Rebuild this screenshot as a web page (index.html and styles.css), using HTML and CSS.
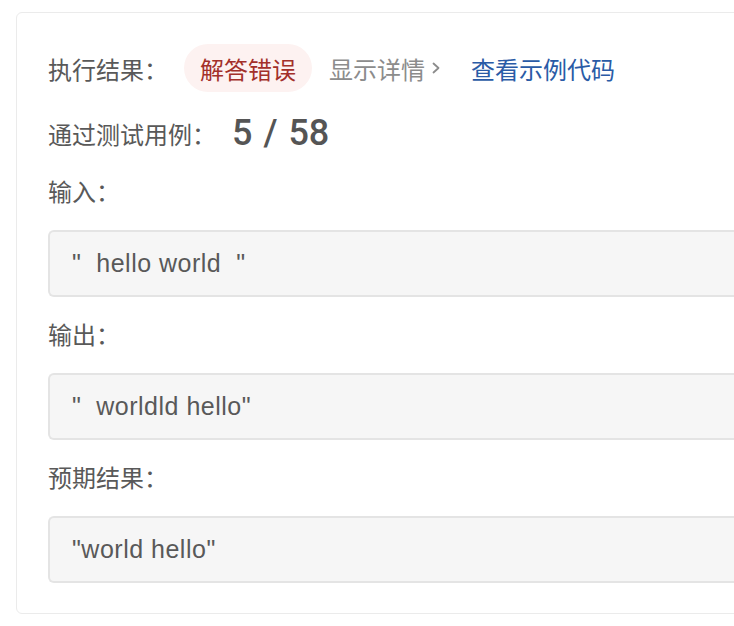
FILE: index.html
```html
<!DOCTYPE html>
<html lang="zh-CN">
<head>
<meta charset="utf-8">
<title>执行结果</title>
<link rel="stylesheet" href="styles.css">
</head>
<body>
<div class="card">
  <div class="row result-row">
    <span class="label">执行结果：</span>
    <span class="pill">解答错误</span>
    <span class="details">显示详情<svg class="chev" width="10" height="14" viewBox="0 0 10 14"><polyline points="2.5,2.5 7.5,7 2.5,11.5" fill="none" stroke="#8c8c8c" stroke-width="1.8" stroke-linecap="round" stroke-linejoin="round"/></svg></span>
    <span class="link">查看示例代码</span>
  </div>
  <div class="row pass-row">
    <span class="label">通过测试用例：</span>
    <span class="count">5 / 58</span>
  </div>
  <div class="section">
    <div class="sec-label">输入：</div>
    <div class="box">"  hello world  "</div>
  </div>
  <div class="section">
    <div class="sec-label">输出：</div>
    <div class="box">"  worldld hello"</div>
  </div>
  <div class="section">
    <div class="sec-label">预期结果：</div>
    <div class="box">"world hello"</div>
  </div>
</div>
</body>
</html>
```
FILE: styles.css
```css
html, body {
  margin: 0;
  padding: 0;
  background: #ffffff;
  overflow: hidden;
}
body {
  font-family: "Liberation Sans", "Noto Sans CJK SC", sans-serif;
  color: #595959;
}
.card {
  margin: 12px 0 0 16px;
  width: 780px;
  border: 1px solid #ebebeb;
  border-radius: 6px;
  padding: 31px 0 30px 31px;
  box-sizing: border-box;
}
.row {
  display: flex;
  align-items: center;
}
.label {
  font-size: 24px;
  color: #595959;
}
.result-row {
  height: 48px;
}
.pill {
  margin-left: 16px;
  height: 48px;
  display: flex;
  align-items: center;
  padding: 0 16px;
  border-radius: 24px;
  background: #fdf2f1;
  color: #a3302a;
  font-size: 24px;
}
.details {
  margin-left: 17px;
  font-size: 24px;
  color: #8c8c8c;
  display: flex;
  align-items: center;
}
.chev {
  margin-left: 6px;
}
.link {
  margin-left: 30px;
  font-size: 24px;
  color: #2a5ba6;
}
.pass-row {
  margin-top: 19px;
  height: 44px;
}
.count {
  margin-left: 16px;
  font-family: Roboto, "Liberation Sans", sans-serif;
  font-size: 36px;
  font-weight: 500;
  word-spacing: 2px;
  color: #555555;
}
.section {
  margin-top: 20px;
}
.section + .section {
  margin-top: 21px;
}
.sec-label {
  font-size: 24px;
  line-height: 36px;
  height: 36px;
  margin-bottom: 19px;
}
.box {
  height: 67px;
  box-sizing: border-box;
  border: 2px solid #e4e4e4;
  border-right: none;
  border-radius: 6px 0 0 6px;
  background: #f6f6f6;
  padding-left: 22px;
  display: flex;
  align-items: center;
  font-size: 25px;
  letter-spacing: 0.5px;
  white-space: pre;
  color: #595959;
}
```
